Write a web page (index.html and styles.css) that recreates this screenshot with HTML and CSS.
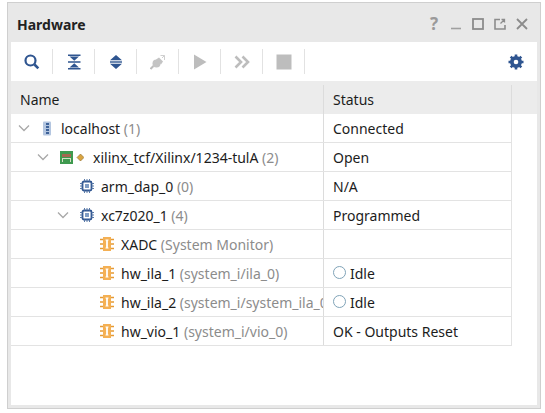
FILE: index.html
```html
<!DOCTYPE html>
<html lang="en">
<head>
<meta charset="utf-8">
<title>Hardware</title>
<link rel="stylesheet" href="styles.css">
</head>
<body>
<section class="panel">
  <header class="titlebar">
    <h1 class="title">Hardware</h1>
    <div class="winctl">
      <span class="help">?</span>
      <svg width="12" height="12" viewBox="0 0 12 12"><path d="M1 10.500h10" stroke="#a0a0a0" stroke-width="1.600"/></svg>
      <svg width="12" height="12" viewBox="0 0 12 12"><rect x="1" y="1" width="10" height="10" fill="none" stroke="#8c8c8c" stroke-width="1.800"/></svg>
      <svg width="12" height="12" viewBox="0 0 12 12"><path d="M6 1.500H1v9.500h10V7" fill="none" stroke="#8c8c8c" stroke-width="1.600"/><path d="M6.500 5.500L10 2M7.500 1.500h3v3" fill="none" stroke="#8c8c8c" stroke-width="1.300"/></svg>
      <svg width="12" height="12" viewBox="0 0 12 12"><path d="M1 1l10 10M11 1L1 11" stroke="#8c8c8c" stroke-width="1.800"/></svg>
    </div>
  </header>
  <div class="body">
    <div class="toolbar">
      <span class="tool"><svg width="16" height="16" viewBox="0 0 16 16"><circle cx="6.500" cy="6.500" r="5" fill="none" stroke="#2f5590" stroke-width="2.200"/><path d="M10.500 10.500l3.800 3.800" stroke="#2f5590" stroke-width="2.600"/></svg></span>
      <span class="tool"><svg width="16" height="16" viewBox="0 0 16 16"><path d="M2 0.500h12.500v1.500H2zM2 7.300h12.500v1.400H2zM2 14h12.500v1.500H2z" fill="#2f5590"/><path d="M3.500 2.500h9.500L8.250 6.800zM3.500 13.500h9.500L8.250 9.200z" fill="#2f5590"/></svg></span>
      <span class="tool"><svg width="16" height="16" viewBox="0 0 16 16"><path d="M8 1l6 5.300H2zM8 15l6-5.300H2z" fill="#2f5590"/><path d="M2 7.300h12v1.400H2z" fill="#2f5590"/></svg></span>
      <span class="tool"><svg width="16" height="16" viewBox="0 0 16 16"><path d="M.5 15l3-3" stroke="#bdbdbd" stroke-width="2"/><circle cx="6.500" cy="9.500" r="4" fill="#c4c4c4"/><path d="M6 5.500l3-2 4 4-2 3z" fill="#c4c4c4"/><path d="M10.500 1.500h4V6M14.500 1.500l-2.500 2.500" fill="none" stroke="#cfcfcf"/></svg></span>
      <span class="tool"><svg width="16" height="16" viewBox="0 0 16 16"><path d="M2 .500L14.500 8 2 15.500z" fill="#bdbdbd"/></svg></span>
      <span class="tool"><svg width="16" height="16" viewBox="0 0 16 16"><path d="M1.500 2.500L7 8l-5.500 5.500M8.500 2.500L14 8l-5.500 5.500" fill="none" stroke="#bdbdbd" stroke-width="2.600"/></svg></span>
      <span class="tool"><svg width="16" height="16" viewBox="0 0 16 16"><rect x="0.500" y="0.500" width="15" height="15" fill="#bdbdbd"/></svg></span>
      <span class="gear"><svg width="16" height="16" viewBox="0 0 16 16"><circle cx="8" cy="8" r="4.300" fill="none" stroke="#2f5590" stroke-width="3.400"/><path d="M8 .5v15M.5 8h15M2.700 2.700l10.600 10.600M13.300 2.700L2.700 13.300" stroke="#2f5590" stroke-width="2.600"/><circle cx="8" cy="8" r="2.300" fill="#fff"/></svg></span>
    </div>
    <div class="table">
      <div class="row head"><div class="c1 hd1">Name</div><div class="c2 hd2">Status</div><div class="c3"></div></div>

      <div class="row"><div class="c1 lv0">
        <svg class="chev" width="12" height="8" viewBox="0 0 12 8"><path d="M1 1.500l5 5 5-5" fill="none" stroke="#a8a8a8" stroke-width="1.300"/></svg>
        <svg class="ic host" width="8" height="15" viewBox="0 0 8 15"><rect x="0" y="0.500" width="8" height="14" rx="1" fill="#b4c6e0"/><rect x="3" y="2" width="3" height="11" fill="#3f6399"/><path d="M3 4.500h3M3 7.500h3M3 10.500h3" stroke="#b4c6e0"/></svg>
        <span class="label">localhost <span class="mut">(1)</span></span></div><div class="c2">Connected</div></div>

      <div class="row"><div class="c1 lv1">
        <svg class="chev" width="12" height="8" viewBox="0 0 12 8"><path d="M1 1.500l5 5 5-5" fill="none" stroke="#a8a8a8" stroke-width="1.300"/></svg>
        <svg class="ic ic-board" width="24" height="13" viewBox="0 0 24 13"><rect width="13" height="13" fill="#3f9a4f"/><rect x="2" y="3" width="9" height="3" fill="#a5674f"/><path d="M2 7.500h9" stroke="#d5dfc5"/><path d="M2.500 8v3M10.500 8v3" stroke="#d5dfc5"/><path d="M20.500 3l3.500 3.500-3.500 3.500L17 6.500z" fill="#d9a441" stroke="#8a6a2a" stroke-width=".6"/></svg>
        <span class="label">xilinx_tcf/Xilinx/1234-tulA <span class="mut">(2)</span></span></div><div class="c2">Open</div></div>

      <div class="row"><div class="c1 lv2-leaf">
        <svg class="ic" width="14" height="14" viewBox="0 0 14 14"><rect x="2.500" y="2.500" width="9" height="9" rx="1.500" fill="none" stroke="#2f5590" stroke-width="1.800"/><rect x="5" y="5" width="4" height="4" fill="#7f9cc4"/><path d="M4.500 0v2.500M7 0v2.500M9.500 0v2.500M4.500 11.500V14M7 11.500V14M9.500 11.500V14M0 4.500h2.500M0 7h2.500M0 9.500h2.500M11.500 4.500H14M11.500 7H14M11.500 9.500H14" stroke="#5a7aa8"/></svg>
        <span class="label">arm_dap_0 <span class="mut">(0)</span></span></div><div class="c2">N/A</div></div>

      <div class="row"><div class="c1 lv2">
        <svg class="chev" width="12" height="8" viewBox="0 0 12 8"><path d="M1 1.500l5 5 5-5" fill="none" stroke="#a8a8a8" stroke-width="1.300"/></svg>
        <svg class="ic" width="14" height="14" viewBox="0 0 14 14"><rect x="2.500" y="2.500" width="9" height="9" rx="1.500" fill="none" stroke="#2f5590" stroke-width="1.800"/><rect x="5" y="5" width="4" height="4" fill="#7f9cc4"/><path d="M4.500 0v2.500M7 0v2.500M9.500 0v2.500M4.500 11.500V14M7 11.500V14M9.500 11.500V14M0 4.500h2.500M0 7h2.500M0 9.500h2.500M11.500 4.500H14M11.500 7H14M11.500 9.500H14" stroke="#5a7aa8"/></svg>
        <span class="label">xc7z020_1 <span class="mut">(4)</span></span></div><div class="c2">Programmed</div></div>

      <div class="row"><div class="c1 lv3">
        <svg class="ic" width="14" height="14" viewBox="0 0 14 14"><rect x="3" y="0" width="8" height="14" fill="#f4b054"/><path d="M0 2.500h3M0 7h3M0 11.500h3M11 2.500h3M11 7h3M11 11.500h3" stroke="#e59a34" stroke-width="1.400"/><path d="M5.500 3h3M5.500 11h3" stroke="#fff"/><path d="M7 3v8" stroke="#fff" stroke-width="1.800"/></svg>
        <span class="label">XADC <span class="mut">(System Monitor)</span></span></div><div class="c2"></div></div>

      <div class="row"><div class="c1 lv3">
        <svg class="ic" width="14" height="14" viewBox="0 0 14 14"><rect x="3" y="0" width="8" height="14" fill="#f4b054"/><path d="M0 2.500h3M0 7h3M0 11.500h3M11 2.500h3M11 7h3M11 11.500h3" stroke="#e59a34" stroke-width="1.400"/><path d="M5.500 3h3M5.500 11h3" stroke="#fff"/><path d="M7 3v8" stroke="#fff" stroke-width="1.800"/></svg>
        <span class="label">hw_ila_1 <span class="mut">(system_i/ila_0)</span></span></div><div class="c2"><span class="idle"></span>Idle</div></div>

      <div class="row"><div class="c1 lv3">
        <svg class="ic" width="14" height="14" viewBox="0 0 14 14"><rect x="3" y="0" width="8" height="14" fill="#f4b054"/><path d="M0 2.500h3M0 7h3M0 11.500h3M11 2.500h3M11 7h3M11 11.500h3" stroke="#e59a34" stroke-width="1.400"/><path d="M5.500 3h3M5.500 11h3" stroke="#fff"/><path d="M7 3v8" stroke="#fff" stroke-width="1.800"/></svg>
        <span class="label">hw_ila_2 <span class="mut">(system_i/system_ila_0)</span></span></div><div class="c2"><span class="idle"></span>Idle</div></div>

      <div class="row"><div class="c1 lv3">
        <svg class="ic" width="14" height="14" viewBox="0 0 14 14"><rect x="3" y="0" width="8" height="14" fill="#f4b054"/><path d="M0 2.500h3M0 7h3M0 11.500h3M11 2.500h3M11 7h3M11 11.500h3" stroke="#e59a34" stroke-width="1.400"/><path d="M5.500 3h3M5.500 11h3" stroke="#fff"/><path d="M7 3v8" stroke="#fff" stroke-width="1.800"/></svg>
        <span class="label">hw_vio_1 <span class="mut">(system_i/vio_0)</span></span></div><div class="c2">OK - Outputs Reset</div></div>
    </div>
  </div>
</section>
</body>
</html>
```
FILE: styles.css
```css
html, body { margin: 0; padding: 0; background: #fff; }
body { width: 545px; height: 413px; overflow: hidden; font-family: "Noto Sans", "Open Sans", sans-serif; font-size: 14px; color: #1c1c1c; }
.panel { box-sizing: border-box; width: 534px; height: 407px; margin: 2px 0 0 7px; border: 1px solid #cfcfcf; background: #e8e8e8; padding: 0 3px 3px 3px; display: flex; flex-direction: column; }
.titlebar { height: 39px; flex: none; display: flex; align-items: center; justify-content: space-between; padding: 3px 9px 0 6px; box-sizing: border-box; }
.title { margin: 0; font-size: 14px; font-weight: 700; color: #222; }
.winctl { display: flex; align-items: center; gap: 10px; }
.help { font-size: 17px; font-weight: 700; color: #9a9a9a; line-height: 12px; width: 12px; text-align: center; }
.body { flex: 1; background: #fff; display: flex; flex-direction: column; min-height: 0; }
.toolbar { height: 39px; flex: none; display: flex; align-items: center; }
.tool { width: 42px; height: 25px; flex: none; box-sizing: border-box; border-right: 1px solid #e2e2e2; display: flex; align-items: center; justify-content: center; }
.gear { margin-left: auto; margin-right: 13px; display: flex; }
.table { display: flex; flex-direction: column; }
.row { height: 29px; box-sizing: border-box; display: flex; width: 501px; border-bottom: 1px solid #e3e3e3; align-items: stretch; }
.head { height: 33px; width: 100%; background: #ececec; border-bottom: 0; padding-top: 4px; }
.c1 { width: 312px; flex: none; box-sizing: border-box; display: flex; align-items: center; overflow: hidden; white-space: pre; }
.c2 { flex: 1; box-sizing: border-box; border-left: 1px solid #dcdcdc; border-right: 1px solid #e3e3e3; padding-left: 9px; display: flex; align-items: center; }
.hd1 { padding-left: 9px; padding-bottom: 1px; }
.hd2 { flex: none; width: 189px; border-color: #dcdcdc; padding-bottom: 1px; }
.c3 { flex: 1; }
.lv0 { padding-left: 7px; }
.lv1 { padding-left: 26px; }
.lv2 { padding-left: 46px; }
.lv2-leaf { padding-left: 69px; }
.lv3 { padding-left: 89px; }
.chev { margin-right: 11px; flex: none; }
.ic { flex: none; margin-right: 7px; }
.ic-board { margin-right: 9px; }
.host { margin-right: 10px; margin-left: 2px; }
.mut { color: #8c8c8c; }
.idle { width: 13px; height: 13px; box-sizing: border-box; border: 1px solid #7fa3b8; border-radius: 50%; margin: -2px 4px 0 0; flex: none; }
```
